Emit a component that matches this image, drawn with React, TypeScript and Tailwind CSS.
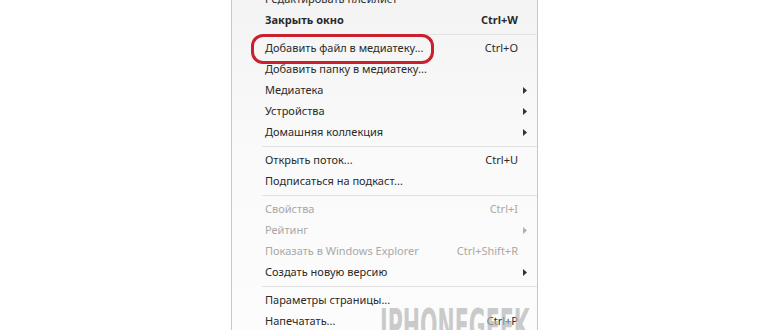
import React from 'react'

type Item =
  | { sep: true }
  | { sep?: false; label: string; shortcut?: string; sub?: boolean; disabled?: boolean; bold?: boolean; circled?: boolean }

const items: Item[] = [
  { label: 'Редактировать плейлист' },
  { label: 'Закрыть окно', shortcut: 'Ctrl+W', bold: true },
  { sep: true },
  { label: 'Добавить файл в медиатеку...', shortcut: 'Ctrl+O', circled: true },
  { label: 'Добавить папку в медиатеку...' },
  { label: 'Медиатека', sub: true },
  { label: 'Устройства', sub: true },
  { label: 'Домашняя коллекция', sub: true },
  { sep: true },
  { label: 'Открыть поток...', shortcut: 'Ctrl+U' },
  { label: 'Подписаться на подкаст...' },
  { sep: true },
  { label: 'Свойства', shortcut: 'Ctrl+I', disabled: true },
  { label: 'Рейтинг', sub: true, disabled: true },
  { label: 'Показать в Windows Explorer', shortcut: 'Ctrl+Shift+R', disabled: true },
  { label: 'Создать новую версию', sub: true },
  { sep: true },
  { label: 'Параметры страницы...' },
  { label: 'Напечатать...', shortcut: 'Ctrl+P' },
]

const Arrow = ({ dim }: { dim?: boolean }) => (
  <svg width="4" height="7" viewBox="0 0 4 7" className={dim ? 'fill-[#b0b0b0]' : 'fill-[#333]'}>
    <path d="M0 0 L4 3.5 L0 7 Z" />
  </svg>
)

export default function App() {
  return (
    <div className="relative h-[330px] w-[770px] overflow-hidden bg-white" style={{ fontFamily: '"Noto Sans", "Open Sans", sans-serif' }}>
      <div className="ml-[231px] mt-[-11px] w-[307px] border-x border-[#c8c8c8] bg-gradient-to-b from-[#f3f3f3] via-[#fafafa] to-[#fcfcfc] text-[11px]">
        {items.map((it, i) =>
          it.sep ? (
            <div key={i} className="flex h-[7px] items-center pl-[30px]">
              <div className="h-[2px] w-full border-t border-[#e2e2e2] border-b-white" />
            </div>
          ) : (
            <div
              key={i}
              className={`relative flex h-[21px] items-center pl-[33px] pr-[10px] ${
                it.disabled ? 'text-[#a8a8a8]' : 'text-[#2a2a2a]'
              } ${it.bold ? 'font-bold' : ''}`}
            >
              <span className="flex-1 whitespace-nowrap">{it.label}</span>
              {it.shortcut && <span className="mr-[9px] whitespace-nowrap">{it.shortcut}</span>}
              {it.sub && (
                <span className="flex w-[4px] justify-center">
                  <Arrow dim={it.disabled} />
                </span>
              )}
              {!it.shortcut && !it.sub && <span className="w-[4px]" />}
              {it.circled && (
                <div className="absolute left-[19px] top-[-4px] h-[30px] w-[183px] rounded-[12px] border-[3px] border-[#c8202c]" />
              )}
            </div>
          )
        )}
      </div>
      <div
        className="pointer-events-none absolute left-[380px] top-[304px] text-[44px] font-bold leading-none text-[#b4b4b4]/70"
        style={{ fontFamily: '"DejaVu Sans Condensed", "DejaVu Sans", sans-serif' }}
      >
        <span className="inline-block origin-left scale-x-[0.52]">IPHONEGEEK</span>
      </div>
    </div>
  )
}
